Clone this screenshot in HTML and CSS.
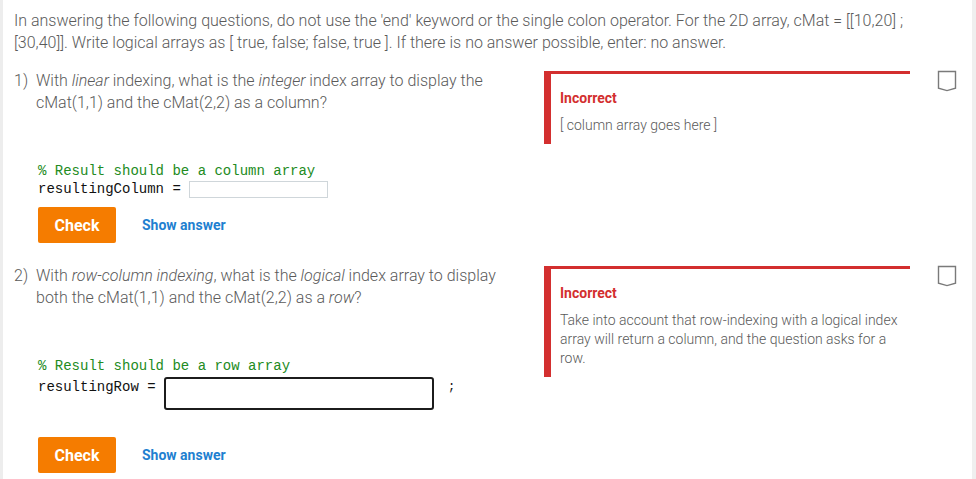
FILE: index.html
```html
<!DOCTYPE html>
<html lang="en">
<head>
<meta charset="utf-8">
<title>Logical indexing questions</title>
<link rel="stylesheet" href="styles.css">
</head>
<body>
<div class="frame">
  <main class="content">
    <p class="intro">In answering the following questions, do not use the 'end' keyword or the single colon operator. For the 2D array, cMat = [[10,20] ; [30,40]]. Write logical arrays as [ true, false; false, true ]. If there is no answer possible, enter: no answer.</p>

    <section class="question">
      <div class="q-main">
        <div class="q-text"><span class="q-num">1)</span><span class="q-body">With <em>linear</em> indexing, what is the <em>integer</em> index array to display the cMat(1,1) and the cMat(2,2) as a column?</span></div>
        <div class="code">
          <div class="comment">% Result should be a column array</div>
          <div class="code-line"><span class="label">resultingColumn = </span><span class="input input-small"></span></div>
        </div>
        <div class="actions"><button class="check">Check</button><a class="show">Show answer</a></div>
      </div>
      <div class="feedback">
        <div class="fb-title">Incorrect</div>
        <div class="fb-text">[ column array goes here ]</div>
      </div>
      <svg class="bookmark" width="20" height="22" viewBox="0 0 20 22"><path d="M1.5 1.5 H18.5 V18.2 L10 20.6 L1.5 18.2 Z" fill="none" stroke="#7a7a7a" stroke-width="1.4" stroke-linejoin="miter"/></svg>
    </section>

    <section class="question q-second">
      <div class="q-main">
        <div class="q-text"><span class="q-num">2)</span><span class="q-body">With <em>row-column indexing</em>, what is the <em>logical</em> index array to display both the cMat(1,1) and the cMat(2,2) as a <em>row</em>?</span></div>
        <div class="code">
          <div class="comment">% Result should be a row array</div>
          <div class="code-line code-line-big"><span class="label">resultingRow = </span><span class="input input-big"></span><span class="semi">;</span></div>
        </div>
        <div class="actions actions-big"><button class="check">Check</button><a class="show">Show answer</a></div>
      </div>
      <div class="feedback">
        <div class="fb-title">Incorrect</div>
        <div class="fb-text">Take into account that row-indexing with a logical index array will return a column, and the question asks for a row.</div>
      </div>
      <svg class="bookmark" width="20" height="22" viewBox="0 0 20 22"><path d="M1.5 1.5 H18.5 V18.2 L10 20.6 L1.5 18.2 Z" fill="none" stroke="#7a7a7a" stroke-width="1.4" stroke-linejoin="miter"/></svg>
    </section>
  </main>
</div>
</body>
</html>
```

FILE: styles.css
```css
html, body {
  margin: 0;
  padding: 0;
  background: #ffffff;
}

body {
  font-family: Roboto, "Liberation Sans", sans-serif;
  font-weight: 300;
  color: #5a5a5a;
}

.frame {
  box-sizing: border-box;
  min-height: 479px;
  border-left: 3px solid #ededed;
  border-right: 4px solid #efefef;
}

.content {
  padding: 10px 14px 0 11px;
}

.intro {
  margin: 0 0 16px 0;
  font-size: 16px;
  line-height: 22px;
}

.question {
  display: flex;
  align-items: flex-start;
}

.q-second {
  margin-top: 22px;
}

.q-main {
  width: 530px;
  flex: none;
}

.q-text {
  display: flex;
  font-size: 16px;
  line-height: 22px;
  padding-right: 20px;
}

.q-num {
  width: 22px;
  flex: none;
}

.q-body em {
  font-style: italic;
}

.code {
  margin-top: 48px;
  padding-left: 24px;
  font-family: "Liberation Mono", "Courier New", monospace;
  font-weight: 400;
  font-size: 14px;
  line-height: 18px;
  color: #111;
}

.comment {
  color: #228b22;
}

.code-line {
  display: flex;
  align-items: flex-start;
  white-space: pre;
}

.input {
  display: block;
  box-sizing: border-box;
  background: #fff;
}

.input-small {
  width: 139px;
  height: 17px;
  margin-top: 1px;
  border: 1px solid #cfd6da;
}

.code-line-big .label {
  margin-top: 3px;
}

.input-big {
  width: 270px;
  height: 33px;
  margin-top: 2px;
  border: 2px solid #1c1c1c;
  border-radius: 3px;
}

.semi {
  margin-left: 14px;
  margin-top: 3px;
  font-size: 12px;
}

.actions {
  display: flex;
  align-items: center;
  margin-top: 9px;
  padding-left: 24px;
}

.actions-big {
  margin-top: 27px;
}

.check {
  width: 78px;
  height: 36px;
  border: none;
  border-radius: 2px;
  background: #f57c00;
  color: #ffffff;
  font-family: Roboto, "Liberation Sans", sans-serif;
  font-weight: 700;
  font-size: 16px;
  padding: 0;
}

.show {
  margin-left: 26px;
  color: #1e7fd0;
  font-weight: 700;
  font-size: 14px;
}

.feedback {
  box-sizing: border-box;
  width: 366px;
  flex: none;
  margin-top: 1px;
  border-left: 7px solid #d32f2f;
  border-top: 3px solid #d32f2f;
  padding: 14px 10px 9px 9px;
}

.fb-title {
  color: #d32f2f;
  font-weight: 700;
  font-size: 14px;
  line-height: 20px;
  margin-bottom: 8px;
}

.fb-text {
  font-size: 14px;
  line-height: 19px;
}

.bookmark {
  flex: none;
  margin-left: 27px;
  margin-top: 0;
}
```
